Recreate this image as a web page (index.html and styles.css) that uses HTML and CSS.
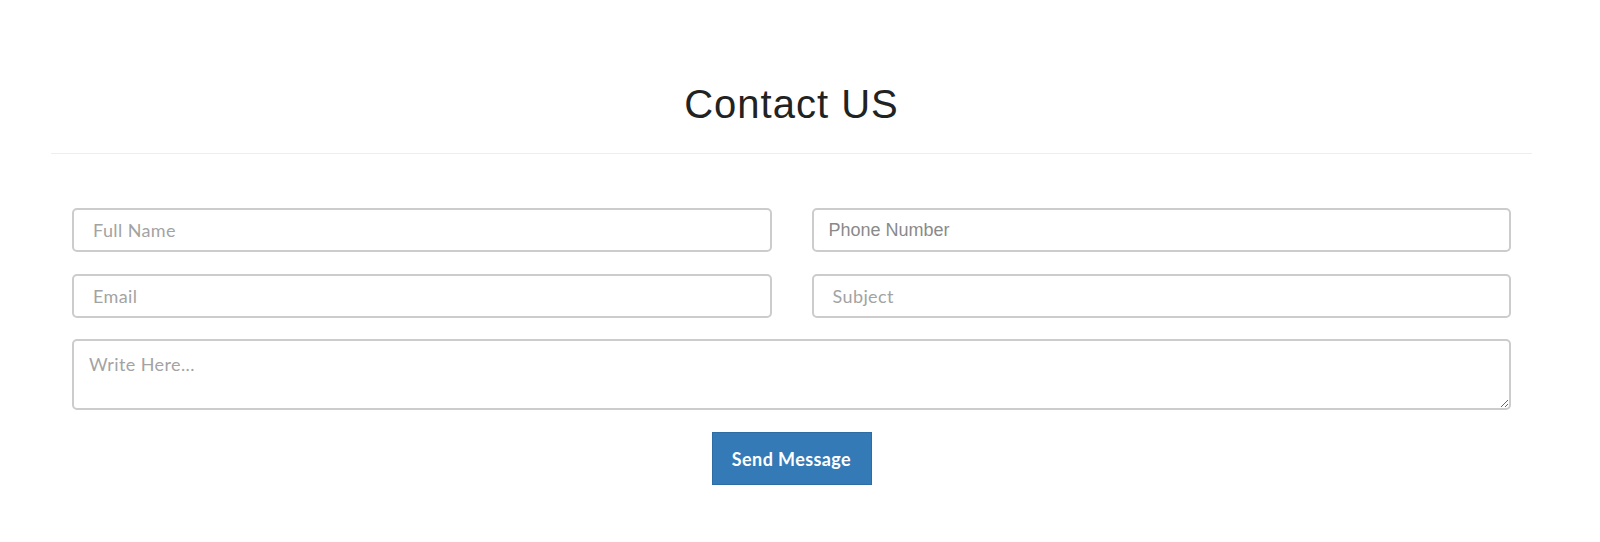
FILE: index.html
```html
<!DOCTYPE html>
<html lang="en">
<head>
    <meta charset="UTF-8">
    <meta name="viewport" content="width=device-width, initial-scale=1.0">
    <title>Contact US</title>
    <link rel="stylesheet" href="styles.css">
</head>
<body>
    <div class="contact">
        <h1>Contact US</h1>
        <hr>
        <form class="contact-form">
            <input type="text" placeholder="Full Name">
            <input type="tel" class="tel" placeholder="Phone Number">
            <input type="email" placeholder="Email">
            <input type="text" placeholder="Subject" class="subject">
            <textarea placeholder="Write Here..."></textarea>
            <div class="actions">
                <button type="button">Send Message</button>
            </div>
        </form>
    </div>
</body>
</html>
```

FILE: styles.css
```css
body {
    margin: 0;
    background-color: #fff;
    font-family: Lato, 'Open Sans', sans-serif;
}
.contact {
    width: 1481px;
    margin-left: 51px;
    padding-top: 82px;
}
h1 {
    margin: 0;
    font-family: 'Liberation Sans', Arial, sans-serif;
    font-weight: normal;
    font-size: 40px;
    line-height: 44px;
    letter-spacing: 1px;
    color: #222;
    text-align: center;
}
hr {
    margin: 27px 0 0;
    border: none;
    border-top: 1px solid #eee;
}
.contact-form {
    display: grid;
    grid-template-columns: 1fr 1fr;
    column-gap: 40px;
    row-gap: 22px;
    padding: 54px 21px 0;
}
input, textarea {
    box-sizing: border-box;
    width: 100%;
    height: 44px;
    padding: 0 19px;
    border: 2px solid #ccc;
    border-radius: 5px;
    font-family: Lato, 'Open Sans', sans-serif;
    font-size: 18px;
    letter-spacing: 0.4px;
    color: #555;
    outline: none;
}
input.tel {
    padding-left: 15px;
    font-family: 'Liberation Sans', Arial, sans-serif;
    letter-spacing: 0;
}
input.tel::placeholder {
    color: #8a8a8a;
}
input::placeholder, textarea::placeholder {
    color: #a3a3a3;
}
textarea {
    grid-column: 1 / 3;
    height: 71px;
    margin-top: -1px;
    padding: 12px 15px;
    resize: vertical;
}
.actions {
    grid-column: 1 / 3;
    display: flex;
    justify-content: center;
}
button {
    width: 160px;
    height: 53px;
    background-color: #337ab7;
    border: 1px solid #2e6da4;
    color: #fff;
    font-family: Lato, 'Open Sans', sans-serif;
    font-weight: bold;
    font-size: 18px;
    letter-spacing: 0.4px;
    cursor: pointer;
}
button:hover {
    background-color: #286090;
}
```
